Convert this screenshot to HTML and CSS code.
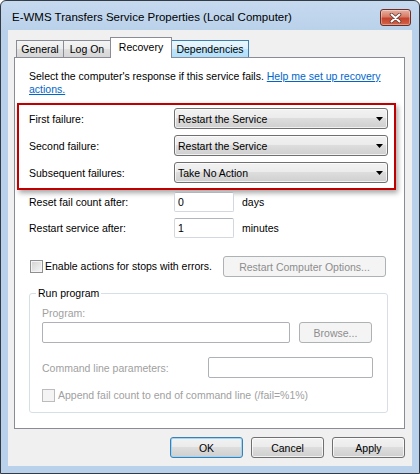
FILE: index.html
```html
<!DOCTYPE html>
<html lang="en">
<head>
  <meta charset="UTF-8">
  <title>E-WMS Transfers Service Properties (Local Computer)</title>
  <link rel="stylesheet" href="styles.css">
</head>
<body>
  <div class="window">
    <div class="titlebar">
      <span class="title">E-WMS Transfers Service Properties (Local Computer)</span>
      <button class="close" aria-label="Close">
        <svg width="13" height="10" viewBox="0 0 13 10">
          <path d="M2.5 1.5 L10.5 8.5 M10.5 1.5 L2.5 8.5" stroke="#5b3a34" stroke-width="3.6" stroke-linecap="round"/>
          <path d="M2.5 1.5 L10.5 8.5 M10.5 1.5 L2.5 8.5" stroke="#fff" stroke-width="2" stroke-linecap="round"/>
        </svg>
      </button>
    </div>

    <div class="client">
      <!-- tab strip -->
      <div class="tabs">
        <div class="tab tab-general">General</div>
        <div class="tab tab-logon">Log On</div>
        <div class="tab tab-recovery selected">Recovery</div>
        <div class="tab tab-deps hover">Dependencies</div>
      </div>

      <div class="panel">
        <p class="intro">Select the computer's response if this service fails. <a href="#">Help me set up recovery<br>actions.</a></p>

        <!-- highlighted failure actions -->
        <div class="failures">
          <div class="field-row">
            <span>First failure:</span>
            <div class="combo"><span>Restart the Service</span><svg width="7" height="4"><path d="M0 0h7L3.5 4z" fill="#000"/></svg></div>
          </div>
          <div class="field-row">
            <span>Second failure:</span>
            <div class="combo"><span>Restart the Service</span><svg width="7" height="4"><path d="M0 0h7L3.5 4z" fill="#000"/></svg></div>
          </div>
          <div class="field-row">
            <span>Subsequent failures:</span>
            <div class="combo"><span>Take No Action</span><svg width="7" height="4"><path d="M0 0h7L3.5 4z" fill="#000"/></svg></div>
          </div>
        </div>

        <div class="count-row">
          <span class="label">Reset fail count after:</span>
          <div class="textbox small">0</div>
          <span class="unit">days</span>
        </div>
        <div class="count-row second">
          <span class="label">Restart service after:</span>
          <div class="textbox small">1</div>
          <span class="unit">minutes</span>
        </div>

        <div class="check-row">
          <label class="check"><span class="checkbox"></span>Enable actions for stops with errors.</label>
          <button class="btn restart-btn" disabled>Restart Computer Options...</button>
        </div>

        <fieldset class="group">
          <legend>Run program</legend>
          <div class="muted line">Program:</div>
          <div class="program-row">
            <div class="textbox off program-box"></div>
            <button class="btn browse-btn" disabled>Browse...</button>
          </div>
          <div class="cmd-row">
            <span class="muted">Command line parameters:</span>
            <div class="textbox off cmd-box"></div>
          </div>
          <label class="check append muted"><span class="checkbox off"></span>Append fail count to end of command line (/fail=%1%)</label>
        </fieldset>
      </div>

      <div class="actions">
        <button class="btn default">OK</button>
        <button class="btn">Cancel</button>
        <button class="btn">Apply</button>
      </div>
    </div>
  </div>
</body>
</html>
```

FILE: styles.css
```css
* {
  box-sizing: border-box;
}

body {
  margin: 0;
  background: #fff;
  font-family: "Liberation Sans", Arial, sans-serif;
  font-size: 10.5px;
  color: #000;
}

.window {
  width: 420px;
  height: 474px;
  border: 1px solid #353b44;
  border-radius: 6px 6px 0 0;
  background: linear-gradient(#c6daef, #b9d1ea 30px);
  padding: 0 7px 7px;
  display: flex;
  flex-direction: column;
}

.titlebar {
  height: 29px;
  margin: 0 -7px;
  padding: 0 8px 0 11px;
  display: flex;
  align-items: flex-start;
  justify-content: space-between;
}

.title {
  margin-top: 10px;
  font-size: 11.5px;
  line-height: 13px;
}

.close {
  margin-top: 8px;
  width: 31px;
  height: 17px;
  padding: 0;
  border: 1px solid #6b2f26;
  border-radius: 3px;
  background: linear-gradient(#eab0a1, #d77b64 45%, #c5432c 55%, #d2654b);
  box-shadow: inset 0 0 0 1px rgba(255, 255, 255, 0.35);
  display: flex;
  align-items: center;
  justify-content: center;
}

.client {
  flex: 1;
  background: #f0f0f0;
  padding: 7px 7px 0 6px;
  display: flex;
  flex-direction: column;
}

/* tabs */
.tabs {
  display: flex;
  align-items: flex-end;
  height: 20px;
  padding-left: 2px;
}

.tab {
  height: 17px;
  line-height: 16px;
  text-align: center;
  border: 1px solid #898c95;
  border-bottom: 0;
  background: linear-gradient(#f4f4f4, #ececec 50%, #e0e0e0 50%, #d6d6d6);
  margin-left: -1px;
}

.tab-general {
  width: 48px;
  margin-left: 0;
}

.tab-logon {
  width: 48px;
}

.tab-recovery {
  width: 62px;
}

.tab-deps {
  width: 78px;
}

.tab.selected {
  position: relative;
  z-index: 1;
  height: 21px;
  line-height: 18px;
  margin-bottom: -1px;
  background: #fff;
}

.tab.hover {
  border-color: #3c7fb1;
  background: linear-gradient(#eaf6fd, #d9f0fc 50%, #bee6fd 50%, #b1dffb);
}

.panel {
  height: 372px;
  border: 1px solid #898c95;
  background: #fff;
  padding: 12px 14px 0;
}

.intro {
  margin: 0;
  line-height: 13px;
}

.intro a {
  color: #0066cc;
}

/* red callout round the failure rows */
.failures {
  margin: 7px -6px 0 -12px;
  border: 2px solid #c00000;
  padding: 3px 6px 5px 10px;
  display: flex;
  flex-direction: column;
  gap: 6px;
  box-shadow: 2px 3px 5px rgba(0, 0, 0, 0.35);
}

.field-row {
  display: grid;
  grid-template-columns: 145px 1fr;
  align-items: center;
  height: 21px;
}

.combo {
  height: 21px;
  border: 1px solid #707070;
  border-radius: 3px;
  background: linear-gradient(#f2f2f2, #ebebeb 50%, #dddddd 50%, #cfcfcf);
  box-shadow: inset 0 0 0 1px rgba(255, 255, 255, 0.7);
  padding: 0 4px 0 3px;
  display: flex;
  align-items: center;
  justify-content: space-between;
}

.count-row {
  display: flex;
  align-items: center;
  height: 20px;
  margin-top: 2px;
}

.count-row.second {
  margin-top: 6px;
}

.count-row .label {
  width: 145px;
}

.unit {
  margin-left: 8px;
}

.textbox {
  height: 20px;
  border: 1px solid #d3d7de;
  border-top-color: #b1b5bc;
  border-radius: 2px;
  background: #fff;
  padding-left: 3px;
  line-height: 18px;
}

.textbox.small {
  width: 60px;
}

.textbox.off {
  border-color: #aeb1b6;
  height: 21px;
}

.check-row {
  display: flex;
  align-items: center;
  height: 21px;
  margin-top: 18px;
}

.check {
  display: flex;
  align-items: center;
  line-height: 13px;
}

.checkbox {
  width: 13px;
  height: 13px;
  margin: 0 2px 0 1px;
  border: 1px solid #8f8f8f;
  background: linear-gradient(135deg, #d2d2d2, #f7f7f7);
  box-shadow: inset 0 0 0 1px #f4f4f4;
}

.checkbox.off {
  margin: 0 3px 0 0;
  border-color: #bcbcbc;
  background: #f4f4f4;
}

.btn {
  width: 73px;
  height: 21px;
  padding: 0;
  font: inherit;
  color: #000;
  border: 1px solid #707070;
  border-radius: 3px;
  background: linear-gradient(#f2f2f2, #ebebeb 50%, #dddddd 50%, #cfcfcf);
  box-shadow: inset 0 0 0 1px rgba(255, 255, 255, 0.7);
}

.btn:disabled {
  color: #8d8d8d;
  border-color: #adb2b5;
  background: #f4f4f4;
  box-shadow: none;
}

.btn.default {
  border-color: #3c7fb1;
  box-shadow: inset 0 0 0 1px #9fd5f5;
}

.restart-btn {
  width: 163px;
  margin: 0 4px 0 auto;
}

/* run program group */
.group {
  margin: 10px 2px 0 0;
  border: 1px solid #d5dfe5;
  border-radius: 3px;
  padding: 7px 14px 10px 12px;
  min-width: 0;
}

.group legend {
  padding: 0 2px;
  margin-left: -6px;
  line-height: 13px;
}

.muted {
  color: #a0a0a0;
}

.line {
  line-height: 13px;
}

.program-row {
  display: flex;
  align-items: center;
  gap: 9px;
  margin-top: 2px;
}

.program-box {
  width: 248px;
}

.cmd-row {
  display: flex;
  align-items: center;
  justify-content: space-between;
  margin-top: 14px;
}

.cmd-box {
  width: 165px;
  height: 22px;
}

.append {
  margin-top: 11px;
}

.actions {
  display: flex;
  justify-content: flex-end;
  gap: 8px;
  margin-top: 8px;
}
```
